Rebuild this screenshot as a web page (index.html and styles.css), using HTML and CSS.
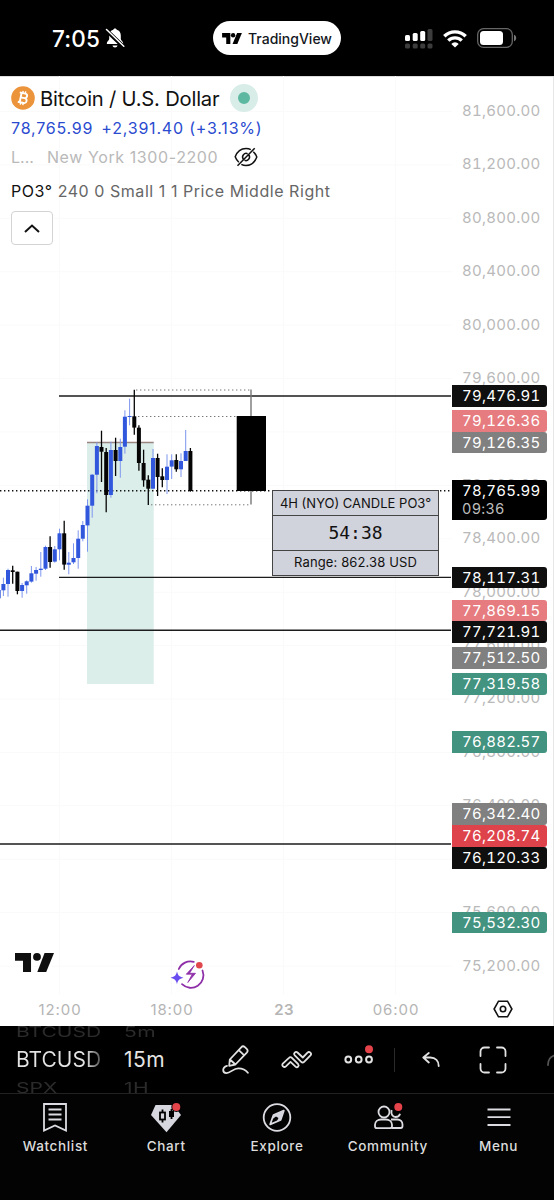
FILE: index.html
```
<!DOCTYPE html>
<html lang="en">
  <head>
    <meta charset="UTF-8" />
    <meta name="viewport" content="width=device-width, initial-scale=1" />
    <title>BTCUSD</title>
    <link rel="stylesheet" href="styles.css" />
  </head>

  <body>
    <header class="status-bar">
      <div class="status-time">
        <span class="clock">7:05</span>
        <svg width="20" height="22" viewBox="0 0 20 22">
          <path d="M10 1.4c-1 0-1.6.6-1.7 1.4C5.6 3.6 4.2 5.7 4.2 8.5v3.4c0 1.5-2.4 2.6-2.4 4.3 0 .6.5.9 1.2.9h14c.7 0 1.2-.3 1.2-.9 0-1.7-2.4-2.8-2.4-4.3V8.500c0-2.8-1.400-4.900-4.100-5.700C11.600 2 11 1.400 10 1.400z" fill="#fff" />
          <path d="M7.500 18.500h5c-.2 1.300-1.200 2-2.500 2s-2.300-.7-2.500-2z" fill="#fff" />
          <path d="M.5 2.500l18 17.300" stroke="#000" stroke-width="4" />
          <path d="M1.500 2.500l17.300 16.700" stroke="#fff" stroke-width="1.5" stroke-linecap="round" />
        </svg>
      </div>
      <div class="island">
        <svg width="20" height="11" viewBox="0 0 36 20">
          <use href="#tv-logo" />
        </svg>
        <span>TradingView</span>
      </div>
      <div class="status-icons">
        <svg width="28" height="21" viewBox="0 0 28 21">
          <g fill="#fff">
            <rect x="0" y="7" width="5" height="6" rx="1.5" />
            <rect x="7.7" y="5" width="5" height="8" rx="1.5" />
            <rect x="15.2" y="3" width="5" height="10" rx="1.5" />
          </g>
          <g fill="#3c3c3c">
            <rect x="22.5" y="1" width="5" height="12" rx="1.5" />
            <rect x="0" y="15.5" width="5" height="5" rx="1.5" />
            <rect x="7.7" y="15.5" width="5" height="5" rx="1.5" />
            <rect x="15.2" y="15.5" width="5" height="5" rx="1.5" />
            <rect x="22.5" y="15.5" width="5" height="5" rx="1.5" />
          </g>
        </svg>
        <svg width="24" height="19" viewBox="0 0 24 19">
          <g fill="none" stroke="#fff" stroke-width="3.4">
            <path d="M1.3 7.2a15.3 15.3 0 0 1 21.4 0" />
            <path d="M5.3 11.6a9.5 9.5 0 0 1 13.4 0" />
          </g>
          <path d="M12 18.6l-3.7-3.7a5.2 5.2 0 0 1 7.4 0z" fill="#fff" />
        </svg>
        <svg width="40" height="20" viewBox="0 0 40 20">
          <rect x=".7" y=".7" width="34.6" height="18.6" rx="5.8" fill="none" stroke="#666" stroke-width="1.3" />
          <rect x="3" y="3" width="23" height="14" rx="3.5" fill="#fff" />
          <path d="M37 6.8c1.4.5 2.2 1.7 2.2 3.2s-.8 2.7-2.2 3.2z" fill="#777" />
        </svg>
      </div>
    </header>

    <main class="chart">
      <svg class="plot" width="452" height="950" viewBox="0 0 452 950">
        <defs>
          <g id="tv-logo">
            <path d="M0 0h15v20H7.500V8H0z" />
            <circle cx="20" cy="4" r="4" />
            <path d="M27.3 0H36l-8.300 20H19z" />
          </g>
        </defs>
        <g id="grid" class="grid"></g>
        <rect class="session" x="87" y="366" width="66.7" height="242" />
        <path class="session-top" d="M87 366.500h66.700" />
        <g class="levels">
          <path d="M59 320h392M59 501.400h392M0 554.300h451M0 768h451" />
        </g>
        <path class="last-price" d="M0 414.700h451" />
        <g class="po3-lines">
          <path d="M136 314h115M138 340.500h99M151 428.800h100" />
        </g>
        <g id="candles"></g>
        <path class="po3-wick" d="M251 313.500v115" />
        <rect x="236.7" y="340" width="29.3" height="75" />
        <svg x="15" y="877" width="39" height="19" viewBox="0 0 36 18" preserveAspectRatio="none" class="watermark">
          <path d="M0 0h14.800v18H7.400V7.400H0z" />
          <circle cx="20.3" cy="3.7" r="3.6" />
          <path d="M27.300 0H36l-7.200 18h-8.200z" />
        </svg>
        <g transform="translate(170 884)">
          <g fill="none" stroke="#8e2fa8" stroke-width="1.8" stroke-linecap="round">
            <path d="M8.800 9A12.600 12.600 0 0 1 23.800 1.800" />
            <path d="M32.500 10.500A12.600 12.600 0 0 1 12 24.200" />
          </g>
          <path d="M24.300 5.500l-8 8.700h6l-4.500 8.300 7.700-9.200h-6z" fill="#8e2fa8" stroke="#8e2fa8" stroke-width=".8" stroke-linejoin="round" />
          <path d="M7 11.300c.9 4.200 2 5.300 6.500 6.500-4.500 1.200-5.600 2.300-6.500 6.500-.9-4.200-2-5.300-6.500-6.500 4.500-1.200 5.600-2.300 6.500-6.500z" fill="#6a4df0" />
          <circle cx="29.3" cy="5.2" r="3.3" fill="#e0474c" />
        </g>
      </svg>

      <aside class="price-axis">
        <ol class="ticks" id="ticks"></ol>
        <div id="tags"></div>
        <svg class="axis-settings" width="20" height="18" viewBox="0 0 20 18">
          <path d="M5.500 1.200h9L18.900 9l-4.400 7.800h-9L1.100 9z" />
          <circle cx="10" cy="9" r="2.7" />
        </svg>
      </aside>

      <div class="time-axis">
        <span>12:00</span>
        <span>18:00</span>
        <span class="day">23</span>
        <span>06:00</span>
      </div>

      <section class="legend">
        <div class="legend-title">
          <svg width="24" height="24" viewBox="0 0 24 24">
            <circle cx="12" cy="12" r="11.8" fill="#ec943b" />
            <g transform="rotate(12 12 12)" fill="none" stroke="#fff" stroke-width="1.9">
              <path d="M7.700 7.200h5.600a2.300 2.300 0 0 1 0 4.600H9.600h4a2.500 2.500 0 0 1 0 5H7.700M9.600 7.200v9.600" />
              <path d="M10.700 5v2.200M13.300 5v2.200M10.700 16.800V19M13.300 16.800V19" stroke-width="1.4" />
            </g>
          </svg>
          <h1>Bitcoin / U.S. Dollar</h1>
          <i class="market-open"></i>
        </div>
        <div class="legend-price">
          <span>78,765.99</span>
          <span>+2,391.40 (+3.13%)</span>
        </div>
        <div class="legend-hidden">
          <span>L...</span>
          <span class="legend-session">New York 1300-2200</span>
          <svg width="24" height="20" viewBox="0 0 24 20">
            <g fill="none" stroke="#111" stroke-width="1.5">
              <path d="M16.800 2.700C15.500 1.900 13.900 1.500 12 1.500 6.500 1.500 3 5 1.200 9.800c.8 2.200 2 4 3.600 5.400M7.300 17.400c1.400.7 3 1.100 4.700 1.100 5.500 0 9-3.700 10.800-8.500-.8-2.100-2-3.900-3.500-5.300" />
              <path d="M9.200 12A3.600 3.600 0 0 1 13.600 6.700M14.900 8A3.600 3.600 0 0 1 10.500 13.300M3.500 18.800L20.700 1.300" />
            </g>
          </svg>
        </div>
        <div class="legend-study"><b>PO3°</b> 240 0 Small 1 1 Price Middle Right</div>
        <button class="collapse" aria-label="Collapse">
          <svg width="16" height="9" viewBox="0 0 16 9">
            <path d="M1 8l7-6.500L15 8" fill="none" stroke="#111" stroke-width="2" />
          </svg>
        </button>
      </section>

      <div class="po3-table">
        <div>4H (NYO) CANDLE PO3°</div>
        <div class="countdown">54:38</div>
        <div class="range">Range: 862.38 USD</div>
      </div>
    </main>

    <section class="toolbar">
      <div class="wheel wheel-symbol">
        <span class="near">BTCUSD</span>
        <span class="current">BTCUSD</span>
        <span class="near">SPX</span>
      </div>
      <div class="wheel wheel-interval">
        <span class="near">5m</span>
        <span class="current">15m</span>
        <span class="near">1H</span>
      </div>
      <svg class="tool-draw" width="28" height="30" viewBox="0 0 28 30">
        <path d="M7.200 20.800l.6-6.300L19.200 2.300c1-1.100 2.600-1.100 3.700-.1l1.800 1.700c1 1 1.100 2.600.1 3.700L13.400 19.500zM8 14.500l5.400 5M16.800 5.200l5.200 5" />
        <path d="M5 20.800c-2.400.8-3.800 2.400-3.800 4.300 0 1.800 1.400 3 3.200 3 4.500 0 6.500-4.800 12-4.800 4 0 7.200 1.400 9.500 4.500" />
      </svg>
      <svg class="tool-indicators" width="32" height="20" viewBox="0 0 32 20">
        <path d="M1.800 13.700L8 7.800c.9-.9 2-.9 2.900 0l6.200 6.200c1.600 1.700-.7 4.400-2.600 2.700l-5-4.800-4.600 4.500c-1.900 1.700-4.800-.8-3.100-2.700z" />
        <path d="M13.800 5.300c-1.700-1.900.7-4.500 2.700-2.800l5.300 5 4.700-4.800c1.900-1.700 4.700.8 3 2.700l-6.400 6.400c-.9.900-2 .9-2.900 0z" />
      </svg>
      <svg class="tool-more" width="30" height="20" viewBox="0 0 30 20">
        <circle cx="4.3" cy="14.5" r="2.9" />
        <circle cx="14.7" cy="14.5" r="2.9" />
        <circle cx="25" cy="14.5" r="2.9" />
        <circle class="badge" cx="25" cy="4.3" r="4" />
      </svg>
      <i class="divider"></i>
      <svg class="tool-undo" width="18" height="15" viewBox="0 0 18 15">
        <path d="M6.800 1L1.300 5.500l5.500 5M1.500 5.500h6.700c5.400 0 8.500 3.300 8.500 8.500" />
      </svg>
      <svg class="tool-full" width="28" height="28" viewBox="0 0 28 28">
        <path d="M1.500 10V5.500a4 4 0 0 1 4-4H10M18 1.500h4.500a4 4 0 0 1 4 4V10M26.500 18v4.500a4 4 0 0 1-4 4H18M10 26.500H5.500a4 4 0 0 1-4-4V18" />
      </svg>
      <svg class="tool-next" width="7" height="12" viewBox="0 0 7 12">
        <path d="M1 11c0-5 2.300-8.200 6-9.400" />
      </svg>
    </section>

    <nav class="tabs">
      <a class="tab">
        <svg width="30" height="32" viewBox="0 0 30 32">
          <path d="M4 3h22v26.500l-11-5-11 5zM8.500 8.500h13M8.500 13.500h13M8.500 18.500h13" />
        </svg>
        Watchlist
      </a>
      <a class="tab">
        <svg width="32" height="32" viewBox="0 0 32 32">
          <path class="solid" d="M5.500 4h18L31 14 16.500 31.300 1 14z" />
          <path class="ink" d="M12.500 8.500v3M12.500 18.500v3M21.500 8v3M21.500 15v3" />
          <rect class="ink" x="10" y="11.5" width="5" height="7" />
          <rect x="19" y="10" width="5" height="6" fill="#000" stroke="none" />
          <circle cx="26.3" cy="6" r="5" fill="#000" stroke="none" />
          <circle class="badge" cx="26.3" cy="6" r="4" />
        </svg>
        Chart
      </a>
      <a class="tab">
        <svg width="32" height="32" viewBox="0 0 32 32">
          <circle cx="16" cy="16.5" r="13.3" />
          <path d="M22.800 9.600L12.500 14l-3.300 9.300L19.600 19z" stroke-linejoin="round" />
          <path d="M22.800 9.600L12.500 14l-1 4 3.500-2.500 2.500 1.500-2 4 4-2z" class="solid" />
        </svg>
        Explore
      </a>
      <a class="tab">
        <svg width="32" height="32" viewBox="0 0 32 32">
          <circle cx="12" cy="11" r="5.5" />
          <path d="M3 23.800c0-3.400 2.800-5.300 6.200-5.300h4.600c3.400 0 6.200 1.900 6.200 5.300v1.400c0 1.300-.8 2-2 2H5c-1.200 0-2-.7-2-2z" />
          <path d="M19.600 9c-.8 4 .9 7 4 7 2.300 0 3.900-1.300 4.500-3.300M19 18.500h6.200c3.300 0 5.300 2.200 5.300 5v1.500c0 1.200-.7 2-1.900 2H20" />
          <circle cx="26.3" cy="6" r="5" fill="#000" stroke="none" />
          <circle class="badge" cx="26.3" cy="6" r="4" />
        </svg>
        Community
      </a>
      <a class="tab">
        <svg width="30" height="32" viewBox="0 0 30 32">
          <path d="M3.500 8.500h23M3.500 16.200h23M3.500 24h23" />
        </svg>
        Menu
      </a>
    </nav>

    <script src="chart.js"></script>
  </body>
</html>
```
FILE: styles.css
```
* {
  box-sizing: border-box;
}

body {
  display: flex;
  flex-direction: column;
  width: 554px;
  height: 1200px;
  margin: 0;
  overflow: hidden;
  background: #000;
  color: #111;
  font-family: Inter, 'Liberation Sans', sans-serif;
}

svg {
  display: block;
  flex: none;
}

.status-bar {
  display: grid;
  grid-template-columns: 213px 128px 1fr;
  align-items: center;
  height: 76px;
  flex: none;
  color: #fff;
}
.status-time {
  display: flex;
  align-items: center;
  gap: 5px;
  padding-left: 52px;
}
.clock {
  font-size: 22.5px;
  font-weight: 500;
  letter-spacing: 0.2px;
}
.island {
  display: flex;
  align-items: center;
  gap: 6px;
  height: 34px;
  padding-left: 9px;
  border-radius: 17px;
  background: #fff;
  color: #131722;
  font-size: 14px;
  font-weight: 500;
  white-space: nowrap;
}
.status-icons {
  display: flex;
  align-items: center;
  gap: 10px;
  padding-left: 64px;
}

.chart {
  position: relative;
  display: grid;
  grid-template-columns: 452px 1fr;
  height: 950px;
  flex: none;
  background: #fff;
  border-top: 1px solid #ddd;
}
.plot {
  margin-top: -1px;
}
.grid {
  stroke: #fafafa;
}
.session {
  fill: #dbeeea;
}
.session-top {
  stroke: #998580;
  stroke-width: 1.4;
}
.levels {
  stroke: #1c1c1c;
  stroke-width: 1.4;
}
.last-price {
  stroke: #111;
  stroke-width: 1.4;
  stroke-dasharray: 1.4 2.6;
}
.po3-lines {
  stroke: #777;
  stroke-dasharray: 1.4 2.6;
}
.po3-wick {
  stroke: #777;
  stroke-width: 1.4;
}
.up {
  fill: #3157dc;
}
.up-wick {
  stroke: #7d96ee;
}
.down {
  fill: #050505;
}
.down-wick {
  stroke: #050505;
  stroke-width: 1.3;
}
.watermark {
  fill: #0f0f0f;
}

.price-axis {
  position: relative;
  height: 949px;
  border-right: 1px solid #e6e6e6;
  font-size: 15px;
  font-variant-numeric: tabular-nums;
  letter-spacing: 0.25px;
}
.ticks {
  margin: 0;
  padding: 7px 0 0 10px;
  list-style: none;
  color: #b9b9b9;
}
.ticks li {
  height: 53.41px;
  line-height: 54px;
}
.tag {
  position: absolute;
  left: 0;
  width: 95px;
  height: 21.6px;
  padding-left: 10px;
  border-radius: 0 3px 3px 0;
  color: #fff;
  line-height: 21px;
}
.tag small {
  display: block;
  margin-top: -3px;
  color: #bdbdbd;
  font-size: 14.5px;
}
.black {
  background: #0f0f0f;
}
.pink {
  background: #e67c80;
}
.grey {
  background: #808080;
}
.green {
  background: #42937f;
}
.red {
  background: #de434b;
}
.last {
  height: 39.5px;
  background: #000;
}
.axis-settings {
  position: absolute;
  left: 41px;
  bottom: 8px;
  fill: none;
  stroke: #111;
  stroke-width: 1.6;
}

.time-axis {
  position: absolute;
  left: 4px;
  bottom: 7px;
  display: grid;
  grid-template-columns: repeat(4, 112px);
  color: #b5b5b5;
  font-size: 15px;
  letter-spacing: 0.9px;
  text-align: center;
}
.day {
  font-weight: 600;
  letter-spacing: 0.3px;
}

.legend {
  position: absolute;
  top: 0;
  left: 11px;
}
.legend-title {
  display: flex;
  align-items: center;
  height: 42px;
}
.legend-title h1 {
  margin: 0 11px 0 5px;
  font-size: 20.2px;
  font-weight: 400;
  letter-spacing: -0.2px;
  white-space: nowrap;
}
.market-open {
  width: 28px;
  height: 28px;
  border: 8px solid #d9ede8;
  border-radius: 50%;
  background: #5cb8a1;
}
.legend-price {
  display: flex;
  gap: 8px;
  height: 18px;
  color: #2a4bd0;
  font-size: 16px;
  letter-spacing: 0.8px;
  line-height: 18px;
}
.legend-hidden {
  display: flex;
  align-items: center;
  margin-top: 9px;
  height: 22px;
  color: #b9b9b9;
  font-size: 16px;
}
.legend-session {
  margin: 0 16px 0 13px;
  letter-spacing: 0.6px;
}
.legend-study {
  margin-top: 12px;
  height: 22px;
  color: #666;
  font-size: 16px;
  letter-spacing: 0.55px;
  line-height: 22px;
  white-space: nowrap;
}
.legend-study b {
  color: #111;
  font-weight: 400;
}
.collapse {
  display: flex;
  align-items: center;
  justify-content: center;
  width: 42px;
  height: 34px;
  margin-top: 9px;
  padding: 0;
  border: 1px solid #d4d4d4;
  border-radius: 4px;
  background: #fff;
}

.po3-table {
  position: absolute;
  top: 413px;
  left: 272px;
  display: grid;
  grid-template-rows: 24px 34px 24px;
  gap: 1px;
  width: 167px;
  border: 1px solid #444;
  background: #444;
  color: #111;
  font-size: 13px;
  text-align: center;
}
.po3-table div {
  background: #d1d3dc;
  line-height: 25px;
}
.po3-table .countdown {
  font-family: 'DejaVu Sans Mono', monospace;
  font-size: 18px;
  line-height: 33px;
}
.po3-table .range {
  letter-spacing: 0.12px;
  line-height: 23px;
}

.toolbar {
  display: flex;
  align-items: center;
  height: 67px;
  flex: none;
  padding-left: 16px;
  background: #000;
  fill: none;
  stroke: #e2e2e2;
  stroke-width: 1.8;
  stroke-linejoin: round;
  stroke-linecap: round;
}
.wheel {
  display: flex;
  flex-direction: column;
  justify-content: center;
  height: 67px;
  overflow: hidden;
  color: #e4e4e4;
  font-size: 21px;
  line-height: 28px;
}
.wheel-symbol {
  width: 88px;
  margin-right: 20px;
}
.wheel-symbol .current {
  background: linear-gradient(90deg, #e4e4e4 70px, #444 86px);
  background-clip: text;
  -webkit-background-clip: text;
  color: transparent;
}
.wheel-interval {
  width: 45px;
  margin-right: 53px;
  letter-spacing: 0.5px;
}
.near {
  color: #2b2b2b;
  transform: scaleY(0.7);
}
.tool-indicators {
  margin-left: 31px;
}
.tool-more {
  margin: -9px 0 0 31px;
  stroke-width: 2;
}
.divider {
  width: 1px;
  height: 24px;
  margin: 0 27px 0 20px;
  background: #2a2a2a;
}
.tool-full {
  margin-left: 39px;
}
.tool-next {
  margin-left: 40px;
  stroke: #555;
}

.tabs {
  display: grid;
  grid-template-columns: repeat(5, 1fr);
  height: 107px;
  flex: none;
  padding-top: 7px;
  border-top: 1px solid #222;
  background: #030303;
}
.tab {
  display: flex;
  flex-direction: column;
  align-items: center;
  gap: 5px;
  color: #dcdcdc;
  font-size: 13.5px;
  font-weight: 500;
  letter-spacing: 0.65px;
  fill: none;
  stroke: #dcdce2;
  stroke-width: 1.8;
}
.solid {
  fill: #d5d6de;
  stroke: none;
}
.ink {
  stroke: #000;
}
.badge {
  fill: #e5434a;
  stroke: none;
}
```
FILE: chart.js
```
// [body top, body bottom, high, low, direction], in thirds of a pixel
const candles = [
  [630, 655, 630, 657, 1],
  [612, 631, 593, 648, 1],
  [570, 612, 566, 650, 1],
  [571, 576, 557, 611, 0],
  [575, 633, 575, 643, 0],
  [615, 633, 609, 653, 1],
  [604, 616, 601, 641, 1],
  [580, 605, 558, 608, 1],
  [570, 581, 561, 602, 1],
  [566, 570, 516, 590, 1],
  [501, 566, 497, 570, 1],
  [501, 546, 469, 563, 0],
  [508, 545, 498, 548, 1],
  [460, 508, 446, 541, 1],
  [460, 554, 422, 569, 0],
  [548, 554, 516, 583, 1],
  [534, 547, 490, 552, 1],
  [476, 534, 451, 566, 1],
  [435, 476, 423, 484, 1],
  [377, 436, 358, 515, 1],
  [284, 377, 282, 413, 1],
  [198, 284, 187, 340, 1],
  [201, 215, 152, 306, 0],
  [216, 345, 204, 397, 0],
  [210, 345, 185, 353, 1],
  [210, 243, 173, 288, 0],
  [201, 243, 176, 293, 1],
  [110, 200, 91, 221, 1],
  [108, 111, 56, 136, 1],
  [109, 143, 29, 164, 0],
  [143, 249, 136, 272, 0],
  [249, 301, 209, 320, 0],
  [299, 326, 286, 375, 0],
  [234, 326, 207, 328, 1],
  [234, 291, 221, 348, 0],
  [289, 300, 265, 322, 0],
  [260, 300, 223, 342, 1],
  [241, 260, 223, 297, 1],
  [240, 268, 223, 275, 0],
  [243, 268, 220, 291, 1],
  [213, 243, 150, 243, 1],
  [213, 333, 204, 335, 0]
]

// [price, centre of the tag, colour]
const tags = [
  ['79,476.91', 320, 'black'],
  ['79,126.36', 345, 'pink'],
  ['79,126.35', 366.5, 'grey'],
  ['78,117.31', 501.5, 'black'],
  ['77,869.15', 534.5, 'pink'],
  ['77,721.91', 556, 'black'],
  ['77,512.50', 582, 'grey'],
  ['77,319.58', 608, 'green'],
  ['76,882.57', 666, 'green'],
  ['76,342.40', 738, 'grey'],
  ['76,208.74', 760, 'red'],
  ['76,120.33', 782, 'black'],
  ['75,532.30', 846.5, 'green']
]

const TOP = 304
const STEP = 4.675
const TICK = 53.41

const y = (v) => (TOP + v / 3).toFixed(1)

document.getElementById('candles').innerHTML = candles
  .map(([top, bottom, high, low, up], i) => {
    const x = i * STEP - 1.3
    const name = up ? 'up' : 'down'
    return `<path class="${name}-wick" d="M${x.toFixed(1)} ${y(high)}V${y(low)}" />
      <rect class="${name}" x="${(x - 2).toFixed(1)}" y="${y(top)}" width="4" height="${((bottom - top) / 3).toFixed(1)}" />`
  })
  .join('')

let grid = ''
for (let x = 59.5; x < 452; x += 112) {
  grid += `<path d="M${x} 0V918" />`
}
let ticks = ''
for (let i = 0; i < 17; i++) {
  grid += `<path d="M0 ${35.5 + i * TICK}H452" />`
  ticks += `<li>${(81600 - i * 400).toLocaleString('en-US')}.00</li>`
}
document.getElementById('grid').innerHTML = grid
document.getElementById('ticks').innerHTML = ticks

document.getElementById('tags').innerHTML =
  tags
    .map(([price, centre, colour]) => `<div class="tag ${colour}" style="top: ${centre - 11.8}px">${price}</div>`)
    .join('') + '<div class="tag last" style="top: 403px">78,765.99<small>09:36</small></div>'
```
